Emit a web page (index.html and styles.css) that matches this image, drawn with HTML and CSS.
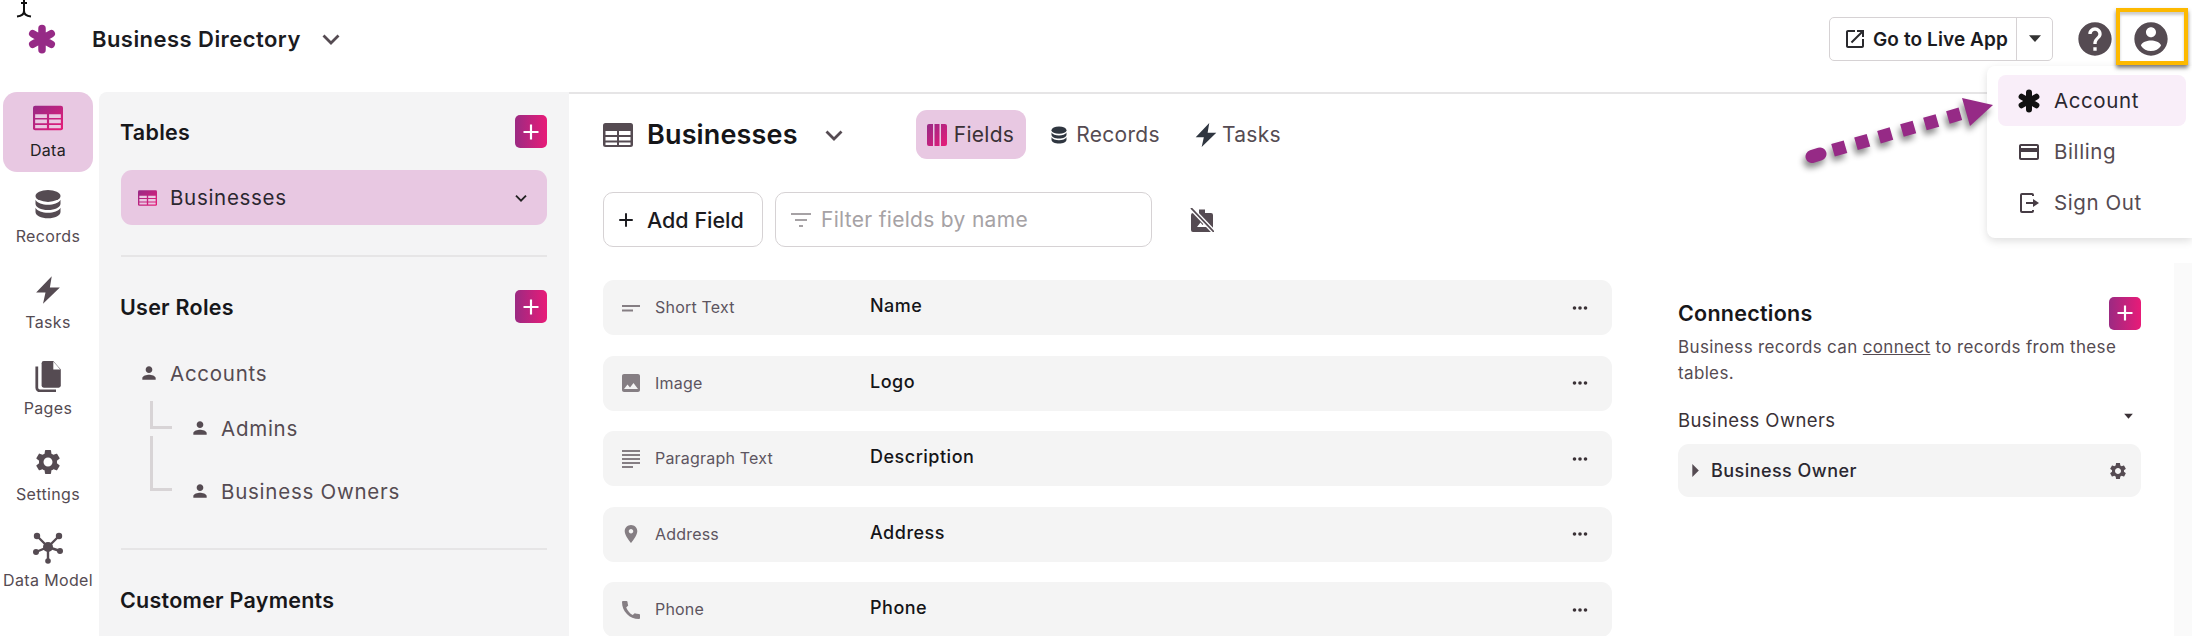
FILE: index.html
```html
<!DOCTYPE html>
<html lang="en">
<head>
<meta charset="utf-8">
<title>Business Directory</title>
<link rel="stylesheet" href="styles.css">
</head>
<body>
<svg width="0" height="0" class="defs" aria-hidden="true">
  <defs>
    <linearGradient id="brand" x1="0" y1="0" x2="1" y2="1"><stop offset="0" stop-color="#962a86"/><stop offset="1" stop-color="#e81b78"/></linearGradient>
    <symbol id="i-person" viewBox="0 0 24 24"><path d="M12 12c2.21 0 4-1.79 4-4s-1.79-4-4-4-4 1.79-4 4 1.79 4 4 4zm0 2c-2.67 0-8 1.34-8 4v2h16v-2c0-2.66-5.33-4-8-4z"/></symbol>
    <symbol id="i-gear" viewBox="0 0 24 24"><path d="M19.14 12.94c.04-.3.06-.61.06-.94 0-.32-.02-.64-.07-.94l2.03-1.58c.18-.14.23-.41.12-.61l-1.92-3.32c-.12-.22-.37-.29-.59-.22l-2.39.96c-.5-.38-1.03-.7-1.62-.94l-.36-2.54c-.04-.24-.24-.41-.48-.41h-3.84c-.24 0-.43.17-.47.41l-.36 2.54c-.59.24-1.13.57-1.62.94l-2.39-.96c-.22-.08-.47 0-.59.22L2.74 8.87c-.12.21-.08.47.12.61l2.03 1.58c-.05.3-.09.63-.09.94s.02.64.07.94l-2.03 1.58c-.18.14-.23.41-.12.61l1.92 3.32c.12.22.37.29.59.22l2.39-.96c.5.38 1.03.7 1.62.94l.36 2.54c.05.24.24.41.48.41h3.84c.24 0 .44-.17.47-.41l.36-2.54c.59-.24 1.13-.56 1.62-.94l2.39.96c.22.08.47 0 .59-.22l1.92-3.32c.12-.22.07-.47-.12-.61l-2.01-1.58zM12 15.6c-1.98 0-3.6-1.62-3.6-3.6s1.62-3.6 3.6-3.6 3.6 1.62 3.6 3.6-1.62 3.6-3.6 3.6z"/></symbol>
    <symbol id="i-bolt" viewBox="0 0 24 24"><path d="M15 1 2.500 14h7.500L8 23 21.500 10h-8z"/></symbol>
    <symbol id="i-db" viewBox="0 0 24 24"><ellipse cx="12" cy="5.500" rx="10" ry="4.800"/><path d="M2 8.600c1.400 2.600 5.600 4 10 4s8.600-1.400 10-4v3.200c0 2.900-4.500 5-10 5s-10-2.100-10-5z"/><path d="M2 15c1.400 2.600 5.600 4 10 4s8.600-1.400 10-4v3.400c0 2.900-4.500 5-10 5s-10-2.100-10-5z"/></symbol>
    <symbol id="i-add" viewBox="0 0 24 24"><path d="M10.700 3h2.600v7.700H21v2.600h-7.700V21h-2.600v-7.700H3v-2.600h7.700z"/></symbol>
    <symbol id="i-caret" viewBox="0 0 24 24"><path d="M4 7h16l-8 9z"/></symbol>
    <symbol id="i-chev" viewBox="0 0 24 24"><path d="M4.500 8.500 12 16l7.500-7.500" fill="none" stroke="currentColor" stroke-width="2.800"/></symbol>
    <symbol id="i-star" viewBox="0 0 24 24"><g fill="none" stroke="currentColor" stroke-width="6" stroke-linecap="round"><path d="M12 3.500v17M4.600 7.750l14.800 8.500M19.400 7.750l-14.800 8.500"/></g></symbol>
    <symbol id="i-more" viewBox="0 0 16 6"><circle cx="2.500" cy="3" r="1.800"/><circle cx="8" cy="3" r="1.800"/><circle cx="13.500" cy="3" r="1.800"/></symbol>
  </defs>
</svg>

<div class="app">
  <header class="topbar">
    <div class="brand">
      <svg class="logo"><use href="#i-star"/></svg>
      <span class="app-name">Business Directory</span>
      <svg class="app-chev"><use href="#i-chev"/></svg>
    </div>
    <div class="top-actions">
      <div class="live-btn">
        <span class="live-main">
          <svg class="live-icon" viewBox="0 0 24 24"><path d="M19 19H5V5h7V3H5c-1.110 0-2 .9-2 2v14c0 1.100.89 2 2 2h14c1.100 0 2-.9 2-2v-7h-2v7zM14 3v2h3.590l-9.830 9.830 1.410 1.410L19 6.410V10h2V3h-7z"/></svg>
          Go to Live App
        </span>
        <span class="live-drop"><svg class="live-caret"><use href="#i-caret"/></svg></span>
      </div>
      <svg class="help" viewBox="0 0 24 24"><path d="M12 2C6.480 2 2 6.480 2 12s4.480 10 10 10 10-4.480 10-10S17.520 2 12 2zm1 17h-2v-2h2v2zm2.070-7.750-.9.920C13.450 12.900 13 13.500 13 15h-2v-.5c0-1.100.45-2.100 1.170-2.830l1.240-1.260c.37-.36.59-.86.59-1.410 0-1.100-.9-2-2-2s-2 .9-2 2H8c0-2.210 1.790-4 4-4s4 1.790 4 4c0 .88-.36 1.680-.93 2.250z"/></svg>
      <svg class="account" viewBox="0 0 24 24"><path d="M12 2C6.480 2 2 6.480 2 12s4.480 10 10 10 10-4.480 10-10S17.520 2 12 2zm0 3c1.660 0 3 1.340 3 3s-1.340 3-3 3-3-1.340-3-3 1.340-3 3-3zm0 14.200c-2.500 0-4.710-1.280-6-3.220.03-1.990 4-3.080 6-3.080 1.990 0 5.970 1.090 6 3.080-1.290 1.940-3.500 3.220-6 3.220z"/></svg>
    </div>
  </header>

  <div class="body">
    <nav class="rail">
      <a class="rail-item active">
        <svg class="rail-icon" viewBox="0 0 28 23"><rect width="28" height="23" rx="2" fill="url(#brand)"/><path d="M2 8h11v3.500H2zM15 8h11v3.500H15zM2 13h11v3.500H2zM15 13h11v3.500H15zM2 18h11v3H2zM15 18h11v3H15z" fill="#eac8e2"/></svg>
        <span>Data</span>
      </a>
      <a class="rail-item"><svg class="rail-icon"><use href="#i-db"/></svg><span>Records</span></a>
      <a class="rail-item"><svg class="rail-icon"><use href="#i-bolt"/></svg><span>Tasks</span></a>
      <a class="rail-item">
        <svg class="rail-icon" viewBox="0 0 24 30"><path d="M8 1h9l7 8v15a2 2 0 0 1-2 2H8a2 2 0 0 1-2-2V3a2 2 0 0 1 2-2z"/><path d="M17 1.500V9h6.500z" fill="#fff"/><path d="M1.500 6v20a3 3 0 0 0 3 3h15" fill="none" stroke="#554b52" stroke-width="2.600"/></svg>
        <span>Pages</span>
      </a>
      <a class="rail-item"><svg class="rail-icon"><use href="#i-gear"/></svg><span>Settings</span></a>
      <a class="rail-item">
        <svg class="rail-icon" viewBox="0 0 30 32"><g stroke="#554b52" stroke-width="2.400"><path d="M4 4l11 11M26 4 15 15M3 20l12-5M27 19l-12-4M15 15v14"/></g><circle cx="15" cy="15" r="5"/><circle cx="4" cy="4" r="3.200"/><circle cx="26" cy="4" r="3.200"/><circle cx="3" cy="20" r="3"/><circle cx="27" cy="19" r="3"/><circle cx="15" cy="29" r="2.800"/></svg>
        <span>Data Model</span>
      </a>
    </nav>

    <aside class="sidebar">
      <div class="side-head">
        <h2>Tables</h2>
        <button class="plus"><svg><use href="#i-add"/></svg></button>
      </div>
      <div class="table-row">
        <svg class="table-icon" viewBox="0 0 28 23"><rect width="28" height="23" rx="2" fill="url(#brand)"/><path d="M2 8h11v3.500H2zM15 8h11v3.500H15zM2 13h11v3.500H2zM15 13h11v3.500H15zM2 18h11v3H2zM15 18h11v3H15z" fill="#eac8e2"/></svg>
        <span class="table-name">Businesses</span>
        <svg class="table-chev"><use href="#i-chev"/></svg>
      </div>
      <hr class="side-rule rule-tables">
      <div class="side-head">
        <h2>User Roles</h2>
        <button class="plus"><svg><use href="#i-add"/></svg></button>
      </div>
      <div class="role role-top"><svg class="role-icon"><use href="#i-person"/></svg><span>Accounts</span></div>
      <div class="role role-sub">
        <i class="elbow elbow-a"></i>
        <svg class="role-icon"><use href="#i-person"/></svg><span>Admins</span>
      </div>
      <div class="role role-sub role-last">
        <i class="elbow elbow-b"></i>
        <svg class="role-icon"><use href="#i-person"/></svg><span>Business Owners</span>
      </div>
      <hr class="side-rule rule-roles">
      <div class="side-head"><h2>Customer Payments</h2></div>
    </aside>

    <main class="main">
      <section class="fields-col">
        <div class="title-row">
          <svg class="title-icon" viewBox="0 0 30 24"><rect width="30" height="24" rx="2.500" fill="#554b52"/><path d="M2.500 8h11.500v4H2.500zM16 8h11.500v4H16zM2.500 14h11.500v3.500H2.500zM16 14h11.500v3.500H16zM2.500 19.500h11.500v2.500H2.500zM16 19.500h11.500v2.500H16z" fill="#fff"/></svg>
          <h1>Businesses</h1>
          <svg class="title-chev"><use href="#i-chev"/></svg>
          <div class="tabs">
            <a class="tab active">
              <svg class="tab-icon" viewBox="0 0 20 22"><path d="M0 2a2 2 0 0 1 2-2h4v22H2a2 2 0 0 1-2-2zM7.500 0h5v22h-5zM14 0h4a2 2 0 0 1 2 2v18a2 2 0 0 1-2 2h-4z" fill="url(#brand)"/></svg>
              Fields
            </a>
            <a class="tab"><svg class="tab-icon db"><use href="#i-db"/></svg>Records</a>
            <a class="tab"><svg class="tab-icon bolt"><use href="#i-bolt"/></svg>Tasks</a>
          </div>
        </div>
        <div class="toolbar">
          <button class="add-field"><svg><use href="#i-add"/></svg>Add Field</button>
          <label class="filter">
            <svg viewBox="0 0 20 14"><path d="M0 0h20v2H0zM4 6h12v2H4zM8 12h4v2H8z"/></svg>
            <span>Filter fields by name</span>
          </label>
          <svg class="hide-icon" viewBox="0 0 24 24"><path d="M9 1.500h6V5h6a2 2 0 0 1 2 2v15a2 2 0 0 1-2 2H3a2 2 0 0 1-2-2V7a2 2 0 0 1 2-2h6z"/><path d="M7 19l3.500-4.500 2 2.500 1.500-1.500 3 3.500z" fill="#fff"/><path d="M1.500.5 23.500 23.500" stroke="#fff" stroke-width="4.500"/><path d="M1 0 24 24" stroke="#554b52" stroke-width="1.800"/></svg>
        </div>
        <div class="field-list">
          <div class="field">
            <svg class="ft-icon" viewBox="0 0 18 18"><path d="M0 6h18v2H0zM0 10.500h11v2H0z"/></svg>
            <span class="ft">Short Text</span><span class="fname">Name</span>
            <svg class="more"><use href="#i-more"/></svg>
          </div>
          <div class="field">
            <svg class="ft-icon" viewBox="3 3 18 18"><path d="M21 19V5c0-1.100-.9-2-2-2H5c-1.100 0-2 .9-2 2v14c0 1.100.9 2 2 2h14c1.100 0 2-.9 2-2zM8.500 13.500l2.500 3.010L14.500 12l4.500 6H5l3.500-4.500z"/></svg>
            <span class="ft">Image</span><span class="fname">Logo</span>
            <svg class="more"><use href="#i-more"/></svg>
          </div>
          <div class="field">
            <svg class="ft-icon" viewBox="0 0 18 18"><path d="M0 0h18v2H0zM0 4h18v2H0zM0 8h18v2H0zM0 12h18v2H0zM0 16h11v2H0z"/></svg>
            <span class="ft">Paragraph Text</span><span class="fname">Description</span>
            <svg class="more"><use href="#i-more"/></svg>
          </div>
          <div class="field">
            <svg class="ft-icon" viewBox="4 2 16 20"><path d="M12 2C8.130 2 5 5.130 5 9c0 5.250 7 13 7 13s7-7.750 7-13c0-3.870-3.130-7-7-7zm0 9.500c-1.380 0-2.500-1.120-2.500-2.500s1.120-2.500 2.500-2.500 2.500 1.120 2.500 2.500-1.120 2.500-2.500 2.500z"/></svg>
            <span class="ft">Address</span><span class="fname">Address</span>
            <svg class="more"><use href="#i-more"/></svg>
          </div>
          <div class="field">
            <svg class="ft-icon" viewBox="3 3 18 18"><path d="M3 4a1 1 0 0 1 1-1h3.500a1 1 0 0 1 1 .9c.1 1.200.3 2.400.7 3.500l-2 2.100c1.300 3.100 3.500 6 6.500 7.500l2-1.800c1.100.4 2.600.6 4.300.7a1 1 0 0 1 1 1V20a1 1 0 0 1-1 1C10.500 21 3 13.500 3 4z"/></svg>
            <span class="ft">Phone</span><span class="fname">Phone</span>
            <svg class="more"><use href="#i-more"/></svg>
          </div>
        </div>
      </section>

      <section class="connections">
        <div class="conn-head">
          <h2>Connections</h2>
          <button class="plus"><svg><use href="#i-add"/></svg></button>
        </div>
        <p class="conn-text">Business records can <u>connect</u> to records from these tables.</p>
        <div class="conn-group">
          <span>Business Owners</span>
          <svg><use href="#i-caret"/></svg>
        </div>
        <div class="conn-row">
          <svg class="conn-tri" viewBox="0 0 8 14"><path d="M0 0l7 7-7 7z"/></svg>
          <span>Business Owner</span>
          <svg class="conn-gear"><use href="#i-gear"/></svg>
        </div>
      </section>
      <div class="side-strip"></div>
    </main>
  </div>

  <svg class="cursor" viewBox="0 0 18 20"><path d="M9 0v11c0 3-2.500 5-7 5.500M9 11c0 3 2.500 5 7 5.500M6 3h6" fill="none" stroke="#111" stroke-width="2"/></svg>

  <div class="menu">
    <a class="menu-item current"><svg class="menu-star"><use href="#i-star"/></svg>Account</a>
    <a class="menu-item">
      <svg viewBox="0 0 24 24"><path d="M20 4H4c-1.110 0-1.990.89-1.990 2L2 18c0 1.110.89 2 2 2h16c1.110 0 2-.89 2-2V6c0-1.110-.89-2-2-2zm0 14H4v-6h16v6zm0-10H4V6h16v2z"/></svg>
      Billing
    </a>
    <a class="menu-item">
      <svg viewBox="0 0 24 24"><path d="M15 2H5a2 2 0 0 0-2 2v16a2 2 0 0 0 2 2h10a2 2 0 0 0 2-2v-1h-2v1H5V4h10v1h2V4a2 2 0 0 0-2-2z"/><path d="M16 8v3H9v2h7v3l6-4z"/></svg>
      Sign Out
    </a>
  </div>

  <div class="highlight"></div>

  <svg class="arrow" viewBox="0 0 210 90">
    <path class="arrow-cap" d="M12 76.500 20 74"/>
    <path class="arrow-dash" d="M33 70.300 165 32.500"/>
    <path class="arrow-head" d="M162 18 193 25 170 46z"/>
  </svg>
</div>
</body>
</html>
```

FILE: styles.css
```css
* { box-sizing: border-box; }
html, body { margin: 0; padding: 0; height: 100%; overflow: hidden; background: #fff; }
body { font-family: Inter, "Liberation Sans", sans-serif; color: #111; }
svg { fill: currentColor; display: block; flex: none; }
.defs { position: absolute; }
h1, h2, p { margin: 0; }
hr { border: 0; margin: 0; }
button { font: inherit; padding: 0; cursor: pointer; }

.app { position: relative; width: 2192px; height: 636px; overflow: hidden; }

/* top bar */
.topbar { height: 92px; display: flex; align-items: flex-start; justify-content: space-between; }
.brand { display: flex; align-items: center; height: 78px; padding-left: 27px; }
.logo { width: 30px; height: 30px; color: #962a86; }
.app-name { margin-left: 35px; font-size: 22px; font-weight: 600; letter-spacing: .45px; color: #1b1b1f; }
.app-chev { width: 24px; height: 24px; margin-left: 18px; color: #554b52; }
.top-actions { display: flex; align-items: flex-start; padding: 17px 0 0; margin-right: 21px; }
.live-btn { display: flex; width: 224px; height: 44px; border: 1.5px solid #d6d2d4; border-radius: 5px; }
.live-main { display: flex; align-items: center; flex: 1; padding-left: 13px; font-size: 19px; font-weight: 600; color: #1b1b1f; border-right: 1.5px solid #d6d2d4; letter-spacing: .1px; white-space: nowrap; }
.live-icon { width: 24px; height: 24px; margin-right: 6px; color: #2a2a2e; }
.live-drop { width: 35px; display: flex; align-items: center; justify-content: center; }
.live-caret { width: 18px; height: 18px; color: #333; }
.help { width: 40px; height: 40px; margin: 2px 0 0 22px; color: #554b52; }
.account { width: 40px; height: 40px; margin: 2px 0 0 16px; color: #554b52; }

/* body */
.body { display: flex; height: 544px; }

/* rail */
.rail { width: 99px; padding: 0 6px 0 3px; display: flex; flex-direction: column; gap: 6px; flex: none; }
.rail-item { height: 80px; padding-top: 10px; border-radius: 14px; display: flex; flex-direction: column; align-items: center; font-size: 16px; letter-spacing: .35px; color: #554b52; }
.rail-item.active { background: #e8c8e2; color: #222; }
.rail-icon { width: 30px; height: 32px; color: #554b52; }
.rail-item span { margin-top: 6px; line-height: 20px; white-space: nowrap; }

/* sidebar */
.sidebar { width: 470px; flex: none; padding: 23px 22px 0; background: #f4f4f5; border-radius: 8px 0 0 0; }
.side-head { display: flex; align-items: center; justify-content: space-between; height: 33px; }
.side-head h2, .conn-head h2 { font-size: 21.5px; font-weight: 600; letter-spacing: .25px; color: #17171a; }
.side-head h2 { margin-left: -1px; }
.plus { width: 32px; height: 33px; border: 0; border-radius: 5px; background: linear-gradient(90deg, #9b2a82, #e81b78); color: #fff; display: flex; align-items: center; justify-content: center; }
.plus svg { width: 20px; height: 20px; }
.table-row { display: flex; align-items: center; height: 55px; margin-top: 22px; padding: 0 18px 0 17px; background: #e8c8e2; border-radius: 11px; }
.table-icon { width: 19px; height: 16px; }
.table-name { margin-left: 13px; font-size: 20.5px; letter-spacing: .7px; color: #2b2730; }
.table-chev { width: 16px; height: 16px; margin-left: auto; color: #222; }
.side-rule { height: 2px; background: #e6e5e6; }
.rule-tables { margin: 30px 0 33px; }
.role { display: flex; align-items: center; height: 40px; font-size: 20.5px; letter-spacing: .75px; color: #554b52; }
.role-top { margin-top: 30px; padding-left: 18px; }
.role-sub { margin-top: 15px; padding-left: 29px; }
.role-last { margin-top: 23px; }
.role-icon { width: 20px; height: 20px; margin-right: 11px; color: #554b52; }
.elbow { align-self: flex-start; flex: none; width: 22px; margin-right: 18px; border-left: 3px solid #d8d4d6; border-bottom: 3px solid #d8d4d6; }
.elbow-a { height: 28px; margin-top: -7px; }
.elbow-b { height: 55px; margin-top: -35px; }
.rule-roles { margin: 37px 0 33px; }

/* main */
.main { flex: 1; display: flex; border-top: 2px solid #e6e5e6; min-width: 0; }
.fields-col { width: 1043px; padding-left: 34px; flex: none; }
.title-row { display: flex; align-items: center; height: 49px; margin-top: 16px; }
.title-icon { width: 30px; height: 24px; }
.title-row h1 { margin-left: 14px; font-size: 27px; font-weight: 600; letter-spacing: .15px; color: #151518; }
.title-chev { width: 24px; height: 24px; margin-left: 24px; color: #554b52; }
.tabs { display: flex; align-items: center; margin-left: 70px; }
.tab { display: flex; align-items: center; height: 49px; padding: 0 12px 0 11px; margin-right: 13px; border-radius: 11px; font-size: 21px; letter-spacing: .3px; color: #554b52; }
.tab.active { background: #e8c8e2; color: #3a3136; }
.tab-icon { width: 20px; height: 22px; margin-right: 7px; }
.tab-icon.db { width: 18px; height: 18px; margin-right: 8px; color: #2f3640; }
.tab-icon.bolt { width: 26px; height: 26px; margin: 0 3px 0 -3px; color: #2f3640; }
.toolbar { display: flex; align-items: center; margin-top: 33px; height: 55px; }
.add-field { display: flex; align-items: center; width: 160px; height: 55px; padding-left: 13px; background: #fff; border: 1.5px solid #d6d2d4; border-radius: 10px; font-size: 21.5px; font-weight: 500; color: #1b1b1f; white-space: nowrap; }
.add-field svg { width: 18px; height: 18px; margin-right: 12px; }
.filter { display: flex; align-items: center; width: 377px; height: 55px; margin-left: 12px; padding-left: 15px; border: 1.5px solid #d6d2d4; border-radius: 10px; font-size: 21px; letter-spacing: .3px; color: #a6a2a5; white-space: nowrap; }
.filter svg { width: 20px; height: 14px; margin-right: 10px; }
.hide-icon { width: 24px; height: 24px; margin-left: 38px; color: #554b52; }
.field-list { display: flex; flex-direction: column; gap: 20.5px; width: 1009px; margin-top: 33px; }
.field { display: flex; align-items: center; height: 55px; padding: 0 24px 0 19px; background: #f4f4f4; border-radius: 11px; }
.ft-icon { width: 18px; height: 18px; color: #857e83; }
.ft { width: 215px; margin-left: 15px; margin-top: -1px; font-size: 16px; letter-spacing: .2px; color: #5d5560; white-space: nowrap; }
.fname { font-size: 18px; font-weight: 500; letter-spacing: .5px; margin-top: -4px; color: #151518; }
.more { width: 16px; height: 6px; margin-left: auto; color: #3a3136; }

/* connections */
.connections { width: 463px; margin: 203px 0 0 66px; flex: none; }
.conn-head { display: flex; align-items: center; justify-content: space-between; height: 32px; }
.conn-text { margin-top: 5px; font-size: 17px; line-height: 26px; letter-spacing: .35px; color: #554b52; }
.conn-group { display: flex; align-items: center; justify-content: space-between; margin-top: 20px; padding-right: 6px; font-size: 18.5px; letter-spacing: .4px; color: #3a3136; height: 28px; }
.conn-group svg { width: 13px; height: 13px; margin-top: -8px; color: #3a3136; }
.conn-row { display: flex; align-items: center; height: 53px; margin-top: 10px; padding: 0 13px 0 14px; background: #f4f4f4; border-radius: 11px; font-size: 18px; font-weight: 500; letter-spacing: .45px; color: #2b2730; }
.conn-tri { width: 8px; height: 13px; margin-right: 11px; color: #554b52; }
.conn-gear { width: 20px; height: 20px; margin-left: auto; color: #554b52; }
.side-strip { flex: none; width: 18px; margin: 169px 0 0 33px; background: #fafafa; }

/* overlays */
.cursor { position: absolute; left: 15px; top: 0; width: 18px; height: 20px; }
.menu { position: absolute; left: 1987px; top: 66px; width: 205px; height: 172px; padding: 9px 6px 0 11px; background: #fff; border-radius: 8px 0 0 8px; box-shadow: 0 3px 8px rgba(0,0,0,.13); }
.menu-item { display: flex; align-items: center; height: 51px; padding-left: 19px; border-radius: 8px; font-size: 20.5px; letter-spacing: .6px; color: #554b52; }
.menu-item.current { background: #f9eef9; color: #2b2730; }
.menu-item svg { width: 24px; height: 24px; margin-right: 13px; color: #473d45; }
.menu-item .menu-star { color: #111; }
.highlight { position: absolute; left: 2116px; top: 8px; width: 72px; height: 57px; border: 4px solid #fdb900; box-shadow: 0 3px 4px rgba(0,0,0,.5), inset 0 3px 3px rgba(0,0,0,.2); }
.arrow { position: absolute; left: 1800px; top: 80px; width: 210px; height: 90px; overflow: visible; filter: drop-shadow(-2px 5px 3px rgba(0,0,0,.45)); }
.arrow-cap { stroke: #962a86; stroke-width: 13px; stroke-linecap: round; fill: none; }
.arrow-dash { stroke: #962a86; stroke-width: 13px; stroke-dasharray: 13 10.9; fill: none; }
.arrow-head { fill: #962a86; }
```
